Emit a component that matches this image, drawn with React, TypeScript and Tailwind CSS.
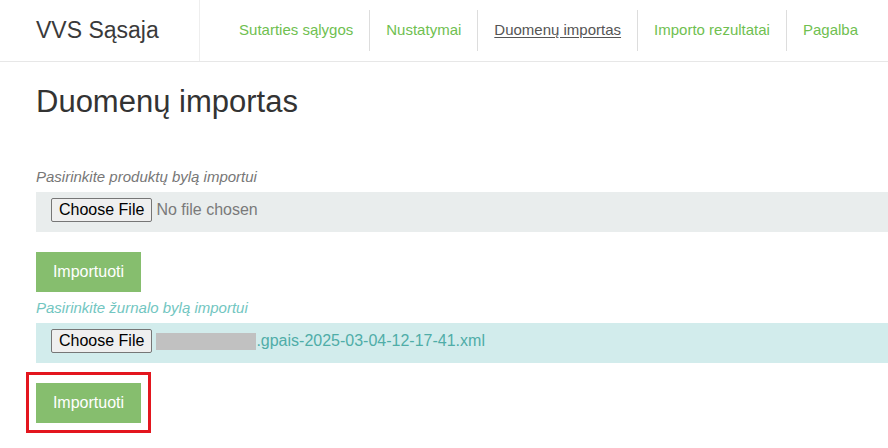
import React from "react";

const navItems = [
  { label: "Sutarties sąlygos", active: false },
  { label: "Nustatymai", active: false },
  { label: "Duomenų importas", active: true },
  { label: "Importo rezultatai", active: false },
  { label: "Pagalba", active: false },
];

function FakeButton() {
  return (
    <span className="inline-flex h-[24px] items-center rounded-[2px] border border-[#767676] bg-[#efefef] px-[7px] text-[16px] leading-none text-black">
      Choose File
    </span>
  );
}

export default function App() {
  return (
    <div className="min-h-[448px] bg-white font-['Liberation_Sans',Arial,sans-serif]">
      <header className="flex h-[62px] border-b border-[#e7e7e7]">
        <div className="flex w-[200px] items-center border-r border-[#eeeeee] pl-[36px] pb-[1px] text-[23px] text-[#3a3a3a]">
          VVS Sąsaja
        </div>
        <nav className="flex flex-1 items-center justify-end pr-[14px]">
          {navItems.map((item, i) => (
            <div
              key={item.label}
              className={
                "flex h-[41px] items-center px-4 text-[15px] " +
                (i > 0 ? "border-l border-[#dddddd] " : "") +
                (item.active ? "text-[#555555] underline underline-offset-2" : "text-[#6fc050]")
              }
            >
              {item.label}
            </div>
          ))}
        </nav>
      </header>

      <main className="pl-[36px]">
        <h1 className="mt-[23px] text-[31px] leading-[34px] text-[#333333]">Duomenų importas</h1>

        <div className="mt-[48px] mb-[5px] text-[15px] leading-[20px] italic text-[#777777]">
          Pasirinkite produktų bylą importui
        </div>
        <div className="flex h-[40px] items-start gap-[4px] bg-[#e9eded] px-[15px] pt-[6px]">
          <FakeButton />
          <span className="text-[16px] leading-[24px] text-[#7a7a7a]">No file chosen</span>
        </div>

        <div className="mt-[20px] flex h-[40px] w-[105px] items-center justify-center bg-[#86be6e] text-[16px] text-white">
          Importuoti
        </div>

        <div className="mt-[6px] mb-[5px] text-[15px] leading-[20px] italic text-[#72c6c1]">
          Pasirinkite žurnalo bylą importui
        </div>
        <div className="flex h-[40px] items-start bg-[#d2ecec] px-[15px] pt-[6px]">
          <FakeButton />
          <span className="ml-[4px] mt-[4px] h-[17px] w-[100px] bg-[#c1c1c1]" />
          <span className="text-[16px] leading-[24px] text-[#4fada8]">.gpais-2025-03-04-12-17-41.xml</span>
        </div>

        <div className="relative mt-[20px] w-[105px]">
          <div className="flex h-[40px] w-[105px] items-center justify-center bg-[#86be6e] text-[16px] text-white">
            Importuoti
          </div>
          <div className="pointer-events-none absolute -left-[10px] -top-[11px] h-[61px] w-[125px] border-[3px] border-[#e3161e]" />
        </div>
      </main>
    </div>
  );
}
